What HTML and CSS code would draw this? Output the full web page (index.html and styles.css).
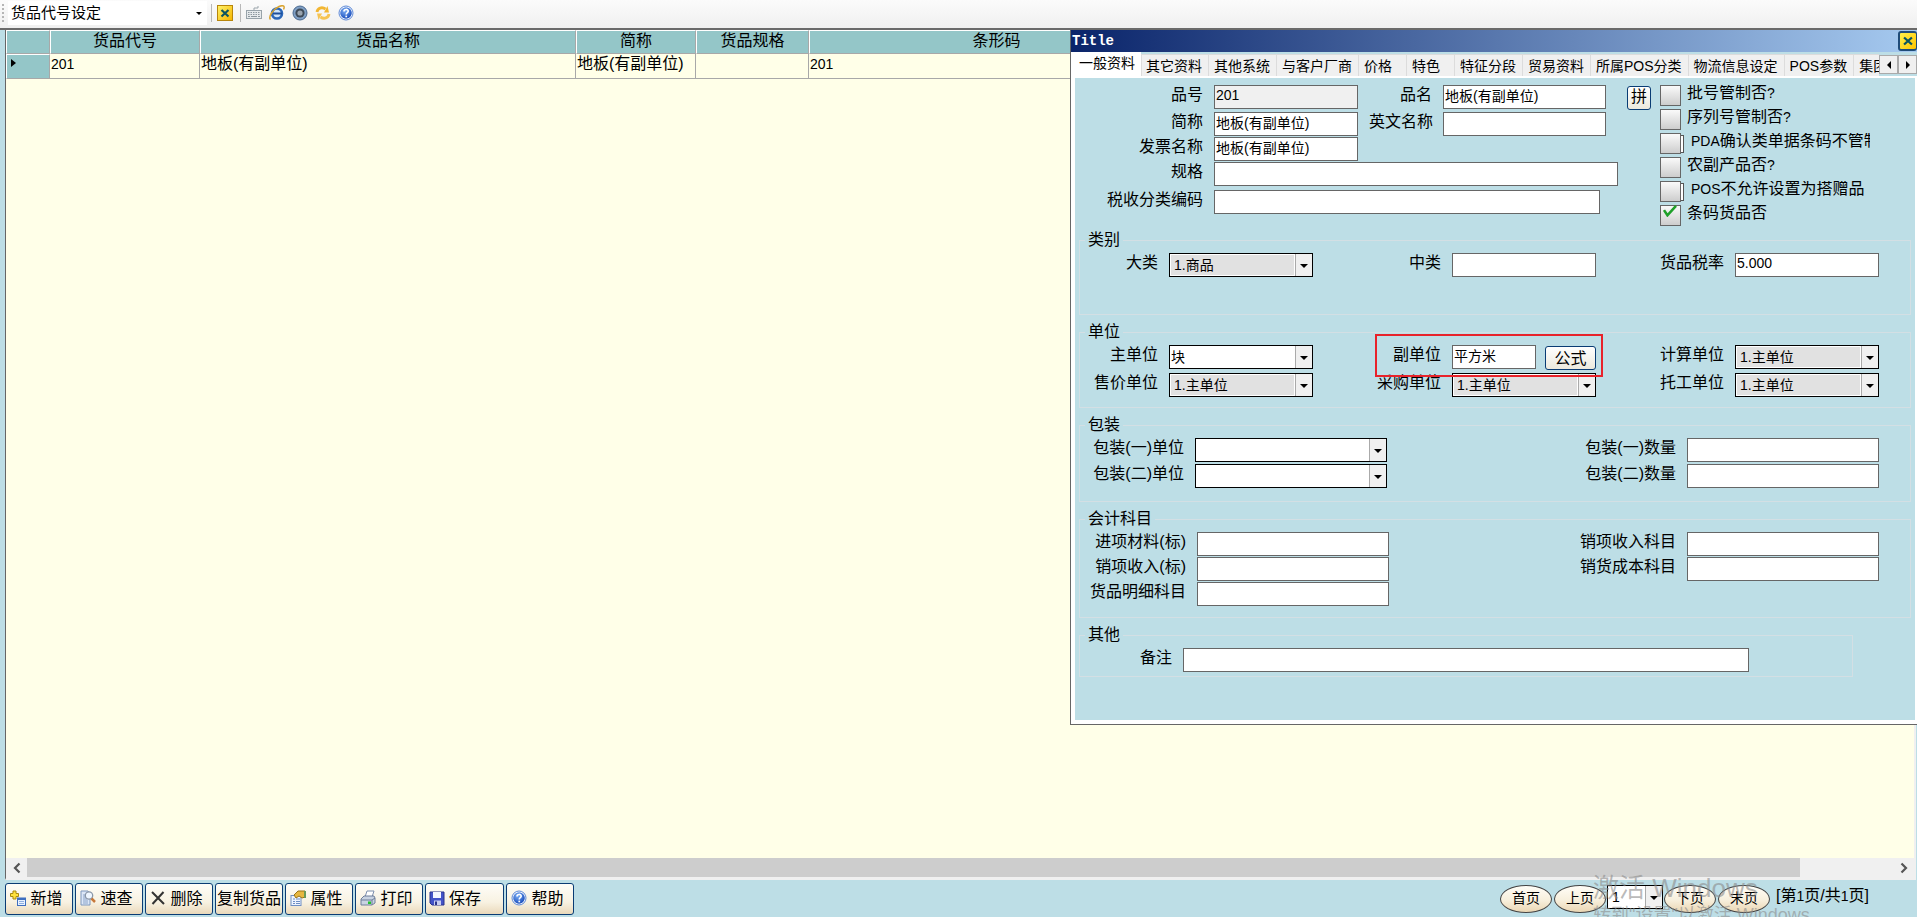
FILE: index.html
```html
<!DOCTYPE html>
<html lang="zh-CN">
<head>
<meta charset="utf-8">
<title>货品代号设定</title>
<link rel="stylesheet" href="styles.css">
</head>
<body>
<svg class="defs" aria-hidden="true">
  <defs>
    <linearGradient id="gold" x1="0" y1="0" x2="1" y2="1"><stop offset="0" stop-color="#fff36a"/><stop offset="1" stop-color="#f5b400"/></linearGradient>
    <radialGradient id="blue" cx=".4" cy=".3" r=".8"><stop offset="0" stop-color="#7fb0f5"/><stop offset="1" stop-color="#0a3fb5"/></radialGradient>
    <symbol id="i-close" viewBox="0 0 16 16"><rect x=".5" y=".5" width="15" height="15" fill="url(#gold)" stroke="#b8860b"/><path d="M4.500 5l7 6.500M11.500 5l-7 6.500" stroke="#0b5560" stroke-width="2.200"/></symbol>
    <symbol id="i-help" viewBox="0 0 16 16"><circle cx="8" cy="8" r="7" fill="#fff" stroke="#5b87d6"/><circle cx="8" cy="8" r="5.800" fill="url(#blue)"/><path d="M6 6.400c0-2.600 4.200-2.600 4.200-.2 0 1.400-2 1.500-2 3.200" fill="none" stroke="#fff" stroke-width="1.600"/><rect x="7.400" y="10.600" width="1.700" height="1.700" fill="#fff"/></symbol>
  </defs>
</svg>

<header class="toolbar">
  <span class="grip"></span>
  <div class="picker"><select aria-label="功能"><option>货品代号设定</option></select></div>
  <span class="sep"></span>
  <button class="tool" aria-label="关闭"><svg viewBox="0 0 16 16"><use href="#i-close"/></svg></button>
  <span class="sep"></span>
  <button class="tool" aria-label="键盘"><svg viewBox="0 0 16 16"><path d="M8 5V3h4V1" fill="none" stroke="#9aa4aa"/><rect x=".5" y="5.500" width="15" height="8" fill="#e6eaec" stroke="#98a3aa"/><path d="M2 7.500h12M2 9.500h12" stroke="#8d979e" stroke-dasharray="1.500 1"/><path d="M2 11.500h2M5 11.500h6M12 11.500h2" stroke="#8d979e"/></svg></button>
  <button class="tool" aria-label="浏览器"><svg viewBox="0 0 16 16"><circle cx="8" cy="8.500" r="5" fill="#cfe4fa" stroke="#2a66b8" stroke-width="2.600"/><path d="M4 8.500h9" stroke="#1d4f9c" stroke-width="2"/><path d="M1.500 14.500C-1 12 4 4 10 1.500c5-2 6 0 4.500 3" fill="none" stroke="#d9a431" stroke-width="1.500"/></svg></button>
  <button class="tool" aria-label="摄像"><svg viewBox="0 0 16 16"><circle cx="8" cy="8" r="7" fill="#7f9fc4" stroke="#49688f"/><circle cx="8" cy="8" r="4.600" fill="#3e4a57"/><circle cx="8" cy="8" r="2.600" fill="#9aa5b0"/></svg></button>
  <button class="tool" aria-label="刷新"><svg viewBox="0 0 16 16"><path d="M2 7c.5-4 5-5.500 8.500-3" fill="none" stroke="#f2b632" stroke-width="2.800"/><path d="M9 7.500L14 7.500 12.500 1z" fill="#f2b632"/><path d="M14 9c-.5 4-5 5.500-8.500 3" fill="none" stroke="#f6c453" stroke-width="2.800"/><path d="M7 8.500L2 8.500 3.500 15z" fill="#f6c453"/></svg></button>
  <button class="tool" aria-label="帮助"><svg viewBox="0 0 16 16"><use href="#i-help"/></svg></button>
</header>

<main class="work">
  <div class="grid">
    <table class="items">
      <colgroup><col class="c-mark"><col class="c-code"><col class="c-name"><col class="c-short"><col class="c-spec"><col class="c-bar"><col></colgroup>
      <thead><tr><th></th><th>货品代号</th><th>货品名称</th><th>简称</th><th>货品规格</th><th>条形码</th><th></th></tr></thead>
      <tbody><tr><th scope="row"><span class="marker"></span></th><td class="num">201</td><td>地板(有副单位)</td><td>地板(有副单位)</td><td></td><td class="num">201</td><td></td></tr></tbody>
    </table>
    <div class="hscroll">
      <button class="arrow" aria-label="向左"><svg viewBox="0 0 20 20"><path d="M12.500 5.500L8 10l4.500 4.500" fill="none" stroke="#555" stroke-width="2.200"/></svg></button>
      <div class="track"><div class="thumb"></div></div>
      <button class="arrow" aria-label="向右"><svg viewBox="0 0 20 20"><path d="M7.500 5.500L12 10l-4.500 4.500" fill="none" stroke="#555" stroke-width="2.200"/></svg></button>
    </div>
  </div>

  <section class="dialog" role="dialog" aria-labelledby="dlg-title">
    <div class="titlebar"><span id="dlg-title">Title</span>
      <button class="dlg-close" aria-label="关闭"><svg viewBox="0 0 16 16"><path d="M3.500 4l9 8M12.500 4l-9 8" stroke="#0b5560" stroke-width="2.600"/></svg></button></div>
    <div class="tabbar">
      <div class="tabs" role="tablist">
        <button role="tab" class="tab active" aria-selected="true">一般资料</button>
        <button role="tab" class="tab">其它资料</button>
        <button role="tab" class="tab">其他系统</button>
        <button role="tab" class="tab">与客户厂商</button>
        <button role="tab" class="tab">价格</button>
        <button role="tab" class="tab">特色</button>
        <button role="tab" class="tab">特征分段</button>
        <button role="tab" class="tab">贸易资料</button>
        <button role="tab" class="tab">所属POS分类</button>
        <button role="tab" class="tab">物流信息设定</button>
        <button role="tab" class="tab">POS参数</button>
        <button role="tab" class="tab">集团</button>
      </div>
      <button class="tabnav prev" aria-label="上一组"></button>
      <button class="tabnav next" aria-label="下一组"></button>
    </div>
    <form class="panel">
      <div class="basics">
        <div class="basic-rows">
          <div class="line after-3"><label for="f-code">品号</label><input id="f-code" class="readonly" value="201" readonly><label for="f-name">品名</label><input id="f-name" value="地板(有副单位)"></div>
          <div class="line after-1"><label for="f-short">简称</label><input id="f-short" value="地板(有副单位)"><label for="f-en">英文名称</label><input id="f-en"></div>
          <div class="line after-1"><label for="f-inv">发票名称</label><input id="f-inv" value="地板(有副单位)"></div>
          <div class="line wide after-4"><label for="f-spec">规格</label><input id="f-spec"></div>
          <div class="line wide tax"><label for="f-tax">税收分类编码</label><input id="f-tax"></div>
        </div>
        <button type="button" class="btn pin">拼</button>
        <div class="checks">
          <label><input type="checkbox"><span>批号管制否<span class="latin">?</span></span></label>
          <label><input type="checkbox"><span>序列号管制否<span class="latin">?</span></span></label>
          <label class="framed"><input type="checkbox"><span><span class="latin">PDA</span>确认类单据条码不管制</span></label>
          <label><input type="checkbox"><span>农副产品否<span class="latin">?</span></span></label>
          <label class="framed"><input type="checkbox"><span><span class="latin">POS</span>不允许设置为搭赠品</span></label>
          <label><input type="checkbox" checked><svg class="tick" viewBox="0 0 16 14"><path d="M1 6l4 6L15 1" fill="none" stroke="#1fa02a" stroke-width="3"/></svg><span>条码货品否</span></label>
        </div>
      </div>

      <fieldset class="kind">
        <legend>类别</legend>
        <div class="cells three">
          <label for="k1">大类</label><div class="combo fixed"><select id="k1"><option>1.商品</option></select></div>
          <label for="k2">中类</label><input id="k2">
          <label for="k3">货品税率</label><input id="k3" value="5.000">
        </div>
      </fieldset>

      <fieldset class="unit">
        <legend>单位</legend>
        <div class="cells three">
          <label for="u1">主单位</label><div class="combo"><select id="u1"><option>块</option></select></div>
          <label for="u2">副单位</label><div class="pair"><input id="u2" value="平方米"><button type="button" class="btn formula">公式</button></div>
          <label for="u3">计算单位</label><div class="combo fixed"><select id="u3"><option>1.主单位</option></select></div>
          <label for="u4">售价单位</label><div class="combo fixed"><select id="u4"><option>1.主单位</option></select></div>
          <label for="u5">采购单位</label><div class="combo fixed"><select id="u5"><option>1.主单位</option></select></div>
          <label for="u6">托工单位</label><div class="combo fixed"><select id="u6"><option>1.主单位</option></select></div>
        </div>
        <div class="highlight"></div>
      </fieldset>

      <fieldset class="pack">
        <legend>包装</legend>
        <div class="cells two">
          <label for="p1">包装(一)单位</label><div class="combo"><select id="p1"><option></option></select></div>
          <label for="p2">包装(一)数量</label><input id="p2">
          <label for="p3">包装(二)单位</label><div class="combo"><select id="p3"><option></option></select></div>
          <label for="p4">包装(二)数量</label><input id="p4">
        </div>
      </fieldset>

      <fieldset class="account">
        <legend>会计科目</legend>
        <div class="cells two">
          <label for="a1">进项材料(标)</label><input id="a1">
          <label for="a2">销项收入科目</label><input id="a2">
          <label for="a3">销项收入(标)</label><input id="a3">
          <label for="a4">销货成本科目</label><input id="a4">
          <label for="a5">货品明细科目</label><input id="a5">
        </div>
      </fieldset>

      <fieldset class="other">
        <legend>其他</legend>
        <div class="cells one"><label for="o1">备注</label><input id="o1"></div>
      </fieldset>
    </form>
  </section>
</main>

<footer class="actions">
  <button class="btn act"><svg viewBox="0 0 16 16"><path d="M3 1h3v2.500h2.500v3H6V9H3V6.500H.5v-3H3z" fill="#ffe23d" stroke="#a98a10"/><rect x="7.500" y="8" width="8" height="7.500" fill="#e8f1ff" stroke="#3f6fbf"/><path d="M7.500 9h8" stroke="#3f6fbf" stroke-width="2"/><path d="M9 11.500h5M9 13.500h5" stroke="#8fb0e0"/></svg>新增</button>
  <button class="btn act"><svg viewBox="0 0 16 16"><path d="M1 1h7l2 2v12H1z" fill="#dce7f7" stroke="#7d97bd"/><path d="M3 5h3M3 7h3M3 9h4M3 11h5M3 13h5" stroke="#8aa3c8"/><circle cx="9" cy="5.500" r="3.700" fill="#eef6ff" stroke="#8a97a8" stroke-width="1.300"/><path d="M11.500 8.500l3.500 3.500" stroke="#c8793a" stroke-width="2.500"/></svg>速查</button>
  <button class="btn act"><svg viewBox="0 0 16 16"><path d="M2 2l12 12M13.500 2L2.500 14" stroke="#333" stroke-width="2"/></svg>删除</button>
  <button class="btn act plain">复制货品</button>
  <button class="btn act"><svg viewBox="0 0 16 16"><rect x="1" y="5.500" width="10" height="10" fill="#eef4ff" stroke="#6f8fc4"/><path d="M3 9h2M6 9h4M3 11.500h2M6 11.500h4M3 13.500h2M6 13.500h4" stroke="#6f8fc4"/><path d="M4 5l4-4h7v6l-3 1-3-2-3 2z" fill="#e7b740" stroke="#9a7417"/><path d="M14 1h2v7h-2z" fill="#6a9a58"/></svg>属性</button>
  <button class="btn act"><svg viewBox="0 0 16 16"><path d="M5 7l2-6h7l-2 6z" fill="#fff" stroke="#7d8fae"/><path d="M1 9l3-3h10l1 2v5l-3 2H1z" fill="#c9d3e2" stroke="#6f7f9a"/><path d="M1 10h11v5M12 10l3-2" fill="none" stroke="#6f7f9a"/><rect x="8" y="11.500" width="3" height="2.500" fill="#25c32d"/></svg>打印</button>
  <button class="btn act save"><svg viewBox="0 0 16 16"><path d="M1 2h14v13H3l-2-2z" fill="#4353c8" stroke="#2b348c"/><rect x="4" y="2" width="8" height="6" fill="#f4f6ff"/><rect x="5" y="10.500" width="7" height="4.500" fill="#c8cdf0"/><rect x="6" y="11.500" width="2" height="3.500" fill="#2b348c"/></svg>保存</button>
  <button class="btn act"><svg viewBox="0 0 16 16"><use href="#i-help"/></svg>帮助</button>

  <nav class="pager">
    <button class="oval">首页</button>
    <button class="oval">上页</button>
    <div class="combo page"><select aria-label="页码"><option>1</option></select></div>
    <button class="oval">下页</button>
    <button class="oval">末页</button>
    <span class="status">[第<span class="latin">1</span>页/共<span class="latin">1</span>页]</span>
  </nav>
</footer>
<div class="watermark"><p class="wm-title">激活 Windows</p><p class="wm-text">转到"设置"以激活 Windows。</p></div>
</body>
</html>
```

FILE: styles.css
```css
* { box-sizing: border-box; }
html, body { height: 100%; }
body {
  margin: 0;
  display: flex;
  flex-direction: column;
  position: relative;
  overflow: hidden;
  background: #bddee6;
  color: #000;
  font: 16px "Liberation Sans", "Noto Sans CJK SC", sans-serif;
}
button, input, select { font: inherit; color: inherit; margin: 0; padding: 0; }
button { display: flex; align-items: center; justify-content: center; }
.defs { position: absolute; width: 0; height: 0; }
.latin { font-size: 14px; }

/* top toolbar */
.toolbar {
  flex: none;
  display: flex;
  align-items: center;
  height: 30px;
  padding: 0 0 2px 2px;
  background: linear-gradient(#fbfbfb, #f0f0f0);
  border-bottom: 2px solid #6a6a6a;
}
.grip { width: 2px; height: 18px; margin-right: 4px; background: repeating-linear-gradient(#b5b5b5 0 2px, transparent 2px 4px); }
.picker { position: relative; width: 199px; height: 24px; margin-right: 4px; background: #fff; }
.picker select { appearance: none; width: 100%; height: 24px; padding-left: 3px; border: 0; background: transparent; font-size: 15px; line-height: 24px; }
.picker::after, .combo::after { content: ""; position: absolute; pointer-events: none; border: 4px solid transparent; border-top-color: #000; border-bottom: 0; }
.picker::after { right: 5px; top: 11px; border-width: 3px 3px 0; }
.sep { width: 1px; height: 18px; margin: 0 5px 0 0; background: #b8b8b8; }
.tool { width: 16px; height: 16px; border: 0; background: none; margin-right: 7px; }
.tool svg { width: 16px; height: 16px; }

/* list */
.work { flex: 1; min-height: 0; display: flex; position: relative; padding: 0 1px 0 5px; }
.grid { flex: 1; min-width: 0; display: flex; flex-direction: column; background: #ffffe8; border-left: 1px solid #666; border-right: 2px solid #f0f0f0; border-bottom: 2px solid #f0f0f0; }
.items { width: 100%; table-layout: fixed; border-collapse: separate; border-spacing: 0; }
.c-mark { width: 44px; }
.c-code { width: 150px; }
.c-name { width: 376px; }
.c-short { width: 120px; }
.c-spec { width: 113px; }
.c-bar { width: 375px; }
.items th, .items td { padding: 0; border: 1px solid #a8a8a8; border-width: 0 1px 1px 0; line-height: 20px; vertical-align: top; white-space: nowrap; font-weight: 400; }
.items th { height: 24px; background: #94c6c8; border-top: 1px solid #fff; border-left: 1px solid #fff; text-align: center; line-height: 20px; }
.items td { height: 25px; padding: 0 1px; border-top: 0; text-align: left; }
.items .num { font-size: 14px; }
.marker { display: block; width: 0; height: 0; margin: 4px 0 0 4px; border: 4px solid transparent; border-left: 5px solid #000; border-right: 0; }
.hscroll { margin-top: auto; display: flex; height: 20px; background: #f0f0f0; }
.arrow { width: 21px; height: 20px; border: 0; background: #f0f0f0; }
.arrow svg { width: 20px; height: 20px; }
.track { flex: 1; }
.thumb { width: 95%; height: 19px; background: #cdcdcd; }

/* dialog */
.dialog { position: absolute; top: 0; right: 0; width: 847px; background: #bddee6; border-left: 1px solid #666; border-bottom: 1px solid #666; }
.titlebar { display: flex; align-items: center; justify-content: space-between; height: 22px; padding-left: 1px; background: linear-gradient(90deg, #0a246a, #a6caf0); color: #fff; font: bold 14px "Liberation Mono", monospace; }
.dlg-close { width: 19px; height: 20px; border: 2px solid #1f4b78; border-right-width: 1px; border-radius: 3px; background: linear-gradient(135deg, #fff14a, #ffc400); }
.dlg-close svg { width: 14px; height: 14px; }
.tabbar { display: flex; align-items: flex-start; height: 26px; border-bottom: 2px solid #fff; }
.tabs { flex: 1; min-width: 0; display: flex; align-items: flex-end; height: 24px; overflow: hidden; }
.tab { flex: none; justify-content: flex-start; min-width: 48px; height: 22px; padding: 0 6px 0 5px; border: 0; border-left: 1px solid #dcdcdc; border-top: 1px solid #dcdcdc; background: #f0f0f0; font-size: 14px; line-height: 20px; white-space: nowrap; }
.tab.active { height: 24px; padding: 0 6px 4px 7px; background: #fff; border-color: #fff; }
.tab.active + .tab { padding: 0 6px 0 4px; }
.tabnav { width: 19px; height: 19px; margin-top: 3px; border: 1px solid #aaa; background: #f0f0f0; }
.tabnav::before { content: ""; border: 4px solid transparent; }
.prev::before { border-left: 0; border-right-color: #000; }
.next::before { border-right: 0; border-left-color: #000; }
.panel { margin: 0; padding: 7px 4px 43px 4px; border: solid #fff; border-width: 0 2px 4px 4px; }

.panel input:not([type="checkbox"]) { width: 100%; min-width: 0; height: 24px; padding: 0 1px 4px; border: 1px solid #666; border-radius: 0; background: #fff; font-size: 14px; outline: 0; }
.panel .readonly { background: #f0f0f0 !important; }
.panel label { line-height: 20px; text-align: right; white-space: nowrap; }

.basics { display: flex; padding: 0 41px 3px 0; }
.basic-rows { flex: 1; min-width: 0; }
.line { display: grid; grid-template-columns: 124px 144px 63px 163px; column-gap: 11px; align-items: start; }
.line.wide { grid-template-columns: 124px 1fr; }
.line.tax { padding-right: 18px; }
.after-1 { margin-bottom: 1px; }
.after-3 { margin-bottom: 3px; }
.after-4 { margin-bottom: 4px; }
.btn { border: 1px solid #0a3c74; border-radius: 3px; background: linear-gradient(#fff, #ece9dd); }
.pin { width: 24px; height: 24px; margin: 1px 9px 0; padding-bottom: 2px; line-height: 20px; }
.checks { width: 210px; display: grid; grid-auto-rows: 24px; }
.checks label { position: relative; display: flex; gap: 6px; text-align: left; overflow: hidden; }
.checks input { appearance: none; flex: none; width: 21px; height: 21px; border: 1px solid #666; background: linear-gradient(#fafafa, #cdcdcd); }
.checks > label > span { line-height: 16px; }
.framed { gap: 10px !important; }
.framed::before { content: ""; position: absolute; left: 21px; top: 2px; width: 2px; height: 16px; border: 1px solid #555; border-left: 0; background: #fff; }
.tick { position: absolute; left: 2px; top: 0; width: 16px; height: 12px; }

/* groups */
fieldset { position: relative; min-width: 0; margin: 0 0 9px; padding: 5px 31px 10px 0; border: 1px solid #d3dfe4; }
legend { height: 16px; margin-left: 5px; padding: 0 3px; line-height: 16px; font-size: 16px; }
.cells { display: grid; column-gap: 11px; align-items: start; }
.three { grid-template-columns: 78px 144px 1fr 144px 1fr 144px; row-gap: 3px; }
.two { grid-template-columns: 104px 192px 1fr 192px; row-gap: 2px; }
.one { grid-template-columns: 92px 1fr; }
.kind { padding-bottom: 37px; }
.pack { padding-bottom: 13px; }
.account { padding-bottom: 11px; }
.account .two { grid-template-columns: 106px 192px 1fr 192px; row-gap: 1px; }
.other { margin: 0 58px 0 0; padding-right: 103px; padding-bottom: 4px; }
.combo { position: relative; height: 24px; border: 1px solid #000; background: linear-gradient(90deg, #aaa 1px, #f0f0f0 1px) right / 17px 100% no-repeat #fff; }
.combo select { appearance: none; display: block; width: 100%; height: 22px; padding-left: 1px; border: 0; border-radius: 0; background: transparent; font-size: 14px; line-height: 20px; }
.combo.fixed select { width: calc(100% - 19px); height: 20px; margin: 1px; padding-left: 3px; background: #e1e1e1; }
.combo::after { right: 4px; top: 10px; }
.pair { display: flex; justify-content: space-between; }
.panel .pair input { width: 84px; }
.formula { width: 51px; height: 24px; margin-top: 1px; padding-bottom: 3px; }
.highlight { position: absolute; left: 295px; top: -6px; width: 228px; height: 43px; border: 2px solid #e8222a; pointer-events: none; }

/* bottom bar */
.actions { flex: none; display: flex; align-items: flex-start; gap: 2px; height: 37px; padding: 3px 48px 0 5px; }
.act { width: 68px; height: 32px; gap: 4px; padding: 0 8px 5px 3px; background: linear-gradient(#fefdf8, #f8f2e2 60%, #ead9bb); white-space: nowrap; }
.act svg { flex: none; width: 16px; height: 16px; margin-top: 3px; }
.act.plain { padding: 0 0 5px; }
.save { width: 79px; justify-content: flex-start; }
.pager { margin-left: auto; display: flex; gap: 2px; padding-top: 2px; }
.oval { width: 52px; height: 28px; padding-bottom: 5px; border: 1px solid #444; border-radius: 50%; background: linear-gradient(#fffdf7, #f7efdc 55%, #ead6b3); font-size: 14px; }
.page { width: 56px; margin: 0 -1px; }
.page select { padding-left: 4px; }
.status { margin-left: 4px; line-height: 22px; white-space: nowrap; }
.watermark { position: absolute; right: 88px; bottom: -10px; width: 236px; color: rgba(140, 140, 140, .6); pointer-events: none; white-space: nowrap; }
.watermark p { margin: 0; }
.wm-title { font-size: 26px; line-height: 30px; }
.wm-text { font-size: 18px; line-height: 24px; }
```
